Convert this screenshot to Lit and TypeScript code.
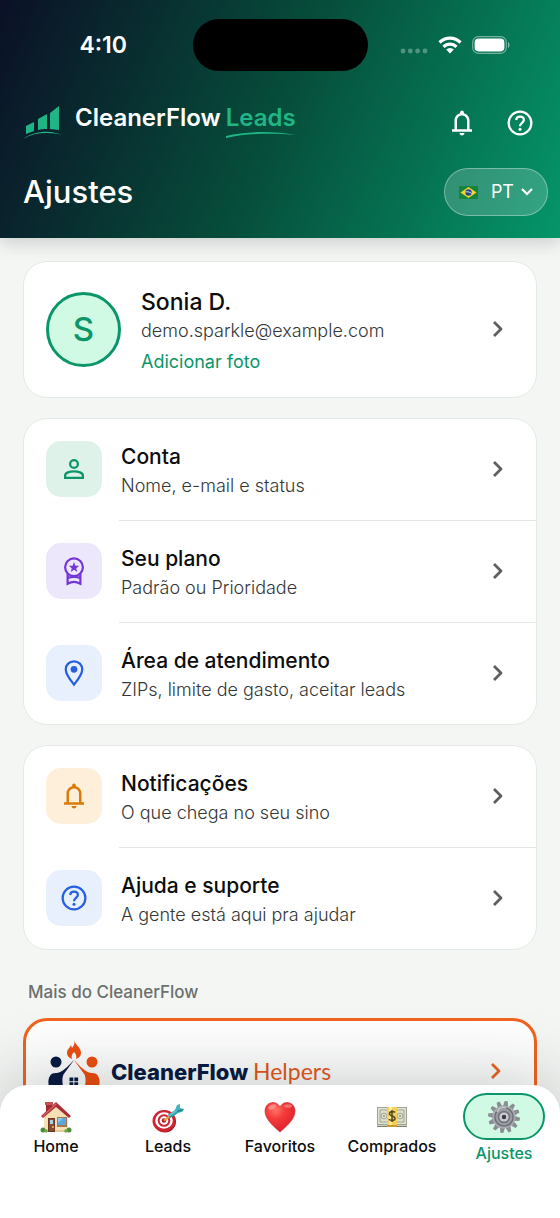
import { LitElement, html, css, svg, nothing } from "lit";
import { customElement, property } from "lit/decorators.js";

const bell = svg`<path fill="currentColor" d="M4 19v-2h2v-7c0-2.8 1.7-5.1 4.5-5.8V3.500a1.500 1.500 0 0 1 3 0v.7C16.300 4.900 18 7.200 18 10v7h2v2H4zm8 3c-1.100 0-2-.9-2-2h4c0 1.100-.9 2-2 2zM8 17h8v-7c0-2.200-1.800-4-4-4s-4 1.800-4 4v7z"/>`;
const help = svg`<circle cx="12" cy="12" r="9.100" fill="none" stroke="currentColor" stroke-width="1.800"/><path d="M8.900 9.600c.2-1.700 1.400-2.700 3.100-2.700 1.800 0 3.100 1.100 3.100 2.700 0 2.100-3.100 2.500-3.100 4.900" fill="none" stroke="currentColor" stroke-width="1.800"/><circle cx="12" cy="17" r="1.200" fill="currentColor"/>`;
const person = svg`<g fill="none" stroke="currentColor" stroke-width="1.800"><circle cx="12" cy="8" r="3.100"/><path d="M4.900 19.100v-1.900c0-2.100 3.700-3.400 7.100-3.400s7.100 1.300 7.100 3.400v1.900z"/></g>`;
const award = svg`<g fill="none" stroke="currentColor" stroke-width="1.800"><circle cx="12" cy="9" r="7.100"/><path d="M6.900 14v8.200c1.700-.9 3.400-1.500 5.100-1.500s3.400.6 5.100 1.500V14M7 17.600c3.300-1.300 6.700-1.300 10 0"/></g><path fill="currentColor" d="m12 4.800 1.100 2.900 3.100.1-2.400 1.900.8 3-2.600-1.700-2.600 1.700.8-3-2.400-1.900 3.100-.1z"/>`;
const pin = svg`<path d="M12 21.300C8.400 16.900 5.400 13 5.400 9.200 5.400 5.400 8.300 2.700 12 2.700s6.600 2.700 6.600 6.500c0 3.800-3 7.700-6.600 12.100z" fill="none" stroke="currentColor" stroke-width="1.800"/><circle cx="12" cy="9" r="2.700" fill="currentColor"/>`;
const chevron = html`<svg class="chevron" viewBox="0 0 12 18" aria-hidden="true"><path d="M2 2l7 7-7 7" fill="none" stroke="currentColor" stroke-width="2.800" stroke-linejoin="round"/></svg>`;

const house = svg`
  <path fill="#9d2e35" d="M6 2h6v10H6z"/><path fill="#c65252" d="M5 1h8v3H5z"/>
  <path fill="#f5dfb4" d="M4 14 16 3l12 11v17H4z"/>
  <path fill="#e7c996" d="M4 29h24v2H4z"/>
  <path fill="#a82f37" d="M1 15 16 1l15 14-2 2L16 6 3 17z"/><path fill="#cf6260" d="m2 15 14-13 1 1L3 16z"/>
  <path fill="#6b3527" d="M8 17h7v14H8z"/><path fill="#8a4a34" d="M9 18h5v12H9z"/><path fill="#a9cfe0" d="M10 19h3v4h-3z"/><circle cx="13" cy="26" r="1" fill="#f2c94c"/>
  <path fill="#a7784c" d="M17 16h10v10H17z"/><path fill="#5aa7e0" d="M18 17h8v7h-8z"/><path fill="#8cc9f1" d="m18 17h5l-5 5z"/>
  <circle cx="3" cy="29" r="2.500" fill="#4f8c3a"/><circle cx="6" cy="30" r="1.800" fill="#6fa94c"/><circle cx="29" cy="29" r="2.500" fill="#4f8c3a"/><circle cx="26" cy="30" r="1.800" fill="#6fa94c"/>`;
const target = svg`
  <ellipse cx="13" cy="20.500" rx="11" ry="11" fill="#8f1820"/><ellipse cx="12" cy="20" rx="11.500" ry="11" fill="#cf2330"/>
  <ellipse cx="12" cy="19.500" rx="8.800" ry="8.300" fill="#fff"/><circle cx="12" cy="19.500" r="6.300" fill="#cf2330"/><circle cx="12" cy="19.500" r="4.300" fill="#fff"/><circle cx="12" cy="19.500" r="2.300" fill="#b51d29"/>
  <path d="m12 19.500 7-5" stroke="#e0a63e" stroke-width="2"/>
  <path d="m17 15.500 9-6" stroke="#2f9bab" stroke-width="4"/><path d="m17 14.500 9-6" stroke="#63c7d1" stroke-width="2"/>
  <path fill="#45b3c1" d="m23 9 2-5 3-1v4l4 1-2 3-5 1z"/><path fill="#23818f" d="m25 11 5-1 2-2-6 1z"/>`;
const heart = svg`
  <defs><radialGradient id="heart" cx=".35" cy=".25" r=".8"><stop offset="0" stop-color="#ff7469"/><stop offset=".4" stop-color="#f43a38"/><stop offset="1" stop-color="#d81f2b"/></radialGradient></defs>
  <path fill="url(#heart)" stroke="#c92531" stroke-width=".6" d="M16 31C9 25 1 18 1 10c0-5 3.500-8.500 8-8.500 3 0 5.500 1.500 7 4.500 1.500-3 4-4.500 7-4.500 4.500 0 8 3.500 8 8.500 0 8-8 15-15 21z"/>
  <ellipse cx="8" cy="6" rx="4" ry="2.200" fill="#fff" opacity=".3" transform="rotate(-25 8 6)"/><ellipse cx="24" cy="5" rx="4" ry="1.800" fill="#fff" opacity=".3"/>`;
const money = svg`
  <path fill="#7f8474" d="M1 23h30v3H1z"/><path fill="#c7cbb9" d="M1 24h30v1H1z"/><path fill="#a3a795" d="M1 6h30v18H1z"/><path fill="#dfe1cf" d="M2 7h28v16H2z"/>
  <g fill="none" stroke="#a0a590"><path d="M4 9h24v12H4z"/><circle cx="8" cy="15" r="3"/><circle cx="24" cy="15" r="3"/></g><circle cx="8" cy="15" r="1" fill="#8c917d"/><circle cx="24" cy="15" r="1" fill="#8c917d"/>
  <path fill="#f2d05c" d="M11 6h10v18H11z"/><path fill="#fbeaa0" d="M13 6h3v18h-3z"/><path fill="#c99c2a" d="M11 24h10v2H11z"/>
  <path d="M19 11.500c-1-1.300-5.500-1.500-5.500 1.200 0 3 5.500 1.800 5.500 4.500 0 2.800-4.800 2.600-6 .9M16 9v12" fill="none" stroke="#5e4a1c" stroke-width="1.600"/>`;
const gear = svg`
  <g fill="#8b8d93">${[8, 38, 68, 98, 128, 158].map((a) => svg`<path transform="rotate(${a} 16 16)" d="M14.500 0h3l1.200 6v20l-1.200 6h-3l-1.200-6V6z"/>`)}</g>
  <circle cx="16" cy="16" r="11.500" fill="#a9abb1"/><circle cx="16" cy="16" r="9.800" fill="#696b72"/><circle cx="16" cy="16" r="8.500" fill="#9b9da4"/><circle cx="16" cy="16" r="6.300" fill="#74767d"/><circle cx="16" cy="16" r="4.600" fill="#c9cbd0"/><circle cx="16" cy="16" r="2.200" fill="#393b40"/><path d="M9 11c2-4 6-5 9-4" fill="none" stroke="#d5d6da" stroke-width="1.300"/>`;

const reset = css`
  :host { display: block; }
  * { box-sizing: border-box; }
  a { color: inherit; text-decoration: none; }
  svg { display: block; flex: none; }
`;

@customElement("status-bar")
class StatusBar extends LitElement {
  static styles = [reset, css`
    .bar { display: grid; grid-template-columns: 1fr 175px 1fr; align-items: center; padding-top: 19px; color: #fff; }
    .island { height: 52px; border-radius: 26px; background: #000; }
    .time { text-align: center; padding-left: 14px; font-size: 23px; line-height: 28px; font-weight: 600; }
    .signals { display: flex; align-items: center; justify-content: center; gap: 10px; padding-right: 18px; }
    .dots { width: 28px; height: 20px; }
    .wifi { width: 24px; height: 18px; }
    .battery { width: 38px; height: 18px; }
  `];
  render() {
    return html`<div class="bar">
      <div class="time">4:10</div>
      <div class="island"></div>
      <div class="signals">
        <svg class="dots" viewBox="0 0 28 20"><g fill="#fff" opacity=".3"><circle cx="3" cy="16" r="2.400"/><circle cx="10.300" cy="16" r="2.400"/><circle cx="17.600" cy="16" r="2.400"/><circle cx="25" cy="16" r="2.400"/></g></svg>
        <svg class="wifi" viewBox="0 0 24 18"><g fill="none" stroke="#fff" stroke-width="3.200"><path d="M1.500 6.500a15 15 0 0 1 21 0"/><path d="M5.500 10.800a9.300 9.300 0 0 1 13 0"/></g><path fill="#fff" d="M8.200 13.600a5.500 5.500 0 0 1 7.600 0L12 17.600z"/></svg>
        <svg class="battery" viewBox="0 0 38 18"><rect x=".7" y=".7" width="33.600" height="16.600" rx="5.500" fill="none" stroke="#fff" stroke-opacity=".45" stroke-width="1.200"/><rect x="2.600" y="2.600" width="29.800" height="12.800" rx="3.800" fill="#fff"/><path d="M36 6v6c2-1 2-5 0-6z" fill="#fff" opacity=".5"/></svg>
      </div>
    </div>`;
  }
}

@customElement("app-header")
class AppHeader extends LitElement {
  static styles = [reset, css`
    .header { background: linear-gradient(113deg, #0b1026 0%, #064e3b 50%, #059669 100%); color: #fff; padding-bottom: 22px; box-shadow: 0 4px 18px rgba(15, 35, 30, .2); }
    .row { display: flex; align-items: center; justify-content: space-between; padding: 0 12px 0 23px; height: 48px; }
    .brand-row { margin-top: 28px; margin-bottom: 21px; }
    .brand { display: flex; align-items: center; gap: 11px; }
    .mark { width: 41px; height: 34px; }
    .word { display: flex; gap: 5px; padding-bottom: 10px; font-size: 24px; line-height: 28px; font-weight: 600; }
    .leads { color: #1fb584; position: relative; }
    .swoosh { position: absolute; left: 0; top: 28px; width: 100%; height: 7px; }
    .actions { display: flex; gap: 2px; }
    .action { width: 56px; height: 48px; display: grid; place-items: center; border: 0; padding: 0; background: none; color: #fff; }
    .action svg { width: 30px; height: 30px; }
    .title { margin: 0; font-size: 31px; line-height: 40px; font-weight: 500; }
    .lang { height: 48px; display: flex; align-items: center; padding: 0 14px; border-radius: 24px; border: 1px solid rgba(255, 255, 255, .35); background: rgba(255, 255, 255, .18); color: #fff; font: 400 18px/24px Inter, sans-serif; }
    .flag { width: 19px; height: 13px; margin-right: 13px; }
    .caret { width: 12px; height: 8px; margin-left: 7px; }
  `];
  render() {
    return html`<header class="header">
      <status-bar></status-bar>
      <div class="row brand-row">
        <div class="brand">
          <svg class="mark" viewBox="0 0 41 34"><g fill="#1fb584"><path d="M3 20l8-4v9l-8 3zM15 13l9-5v15c-3 0-6 0-9 1zM27 7l9-7v24l-9-1z"/><path d="M0 33c12-9 28-9 40-4-14-3-28-3-40 4z"/></g></svg>
          <div class="word"><span>CleanerFlow</span><span class="leads">Leads<svg class="swoosh" viewBox="0 0 66 7" preserveAspectRatio="none"><path fill="#1fb584" d="M0 4C20-1 46-1 66 3 45 1 22 1 0 6z"/></svg></span></div>
        </div>
        <div class="actions">
          <button class="action" aria-label="Notificações"><svg viewBox="0 0 24 24">${bell}</svg></button>
          <button class="action" aria-label="Ajuda"><svg viewBox="0 0 24 24">${help}</svg></button>
        </div>
      </div>
      <div class="row">
        <h1 class="title">Ajustes</h1>
        <button class="lang">
          <svg class="flag" viewBox="0 0 19 13"><path fill="#17843b" d="M0 0h19v13H0z"/><path fill="#f5d335" d="m9.500 1 8 5.500-8 5.500-8-5.500z"/><circle cx="9.500" cy="6.500" r="3.200" fill="#26478e"/><path d="M6.500 6c2-.6 4.500 0 6 1.500" fill="none" stroke="#fff" stroke-width=".8"/></svg>
          PT
          <svg class="caret" viewBox="0 0 12 8"><path d="M1 1l5 5 5-5" fill="none" stroke="#fff" stroke-width="2.200"/></svg>
        </button>
      </div>
    </header>`;
  }
}

@customElement("settings-row")
class SettingsRow extends LitElement {
  @property() label = "";
  @property() detail = "";
  @property() tone = "green";
  @property({ attribute: false }) icon: unknown = nothing;
  static styles = [reset, css`
    .row { display: flex; align-items: center; gap: 19px; padding: 19px 32px 20px 22px; }
    .tile { width: 56px; height: 56px; border-radius: 15px; display: grid; place-items: center; flex: none; }
    .tile svg { width: 30px; height: 30px; }
    .green { background: #def2e9; color: #0a9669; }
    .purple { background: #ede7fb; color: #7536d8; }
    .blue { background: #e8effd; color: #2660e0; }
    .amber { background: #fdefd9; color: #d97a09; }
    .text { flex: 1; min-width: 0; padding-top: 5px; }
    .label { font-size: 21px; line-height: 28px; font-weight: 500; color: #0b0d0e; }
    .detail { font-size: 18px; line-height: 29px; font-weight: 300; color: #333738; }
    .chevron { width: 12px; height: 18px; color: #5c5e60; }
  `];
  render() {
    return html`<a class="row" href="#">
      <span class="tile ${this.tone}"><svg viewBox="0 0 24 24">${this.icon}</svg></span>
      <div class="text"><div class="label">${this.label}</div><div class="detail">${this.detail}</div></div>
      ${chevron}
    </a>`;
  }
}

@customElement("tab-bar")
class TabBar extends LitElement {
  static styles = [reset, css`
    .tabs { display: grid; grid-template-columns: repeat(5, 1fr); align-items: center; padding: 8px 0 55px; background: #fff; border-radius: 28px 28px 0 0; box-shadow: 0 -6px 70px rgba(15, 30, 25, .24); }
    .tab { display: flex; flex-direction: column; align-items: center; gap: 3px; font-size: 16px; line-height: 20px; font-weight: 500; color: #0b0d0e; }
    .icon { height: 32px; display: grid; place-items: center; }
    .icon svg { width: 32px; height: 32px; }
    .active { color: #0a9669; }
    .active .icon { width: 82px; height: 47px; border: 2px solid #0a9669; border-radius: 24px; background: #d1fae5; }
  `];
  tabs = [["Home", house], ["Leads", target], ["Favoritos", heart], ["Comprados", money], ["Ajustes", gear]] as const;
  render() {
    return html`<nav class="tabs">${this.tabs.map(([name, art]) => html`
      <a class="tab ${name === "Ajustes" ? "active" : ""}" href="#"><span class="icon"><svg viewBox="0 0 32 32">${art}</svg></span><span>${name}</span></a>`)}</nav>`;
  }
}

@customElement("app-root")
class AppRoot extends LitElement {
  static styles = [reset, css`
    :host { position: relative; height: 100vh; overflow: hidden; font-family: Inter, sans-serif; background: #f4f6f4; }
    .page { height: 100%; display: flex; flex-direction: column; }
    app-header { position: relative; z-index: 1; }
    .content { flex: 1; min-height: 0; overflow-y: auto; scrollbar-width: none; padding: 23px 23px 140px; }
    .card { background: #fff; border: 1px solid #e5e9e6; border-radius: 24px; margin-bottom: 20px; overflow: hidden; }
    .divider { height: 1px; margin: 0 0 0 95px; border: 0; background: #e3e6e4; }
    .profile { display: flex; align-items: center; gap: 20px; padding: 16px 32px 17px 22px; }
    .avatar { width: 75px; height: 75px; border: 3px solid #0a9669; border-radius: 50%; background: #d1fae5; color: #0a9669; display: grid; place-items: center; font-size: 33px; font-weight: 500; flex: none; }
    .who { flex: 1; min-width: 0; padding-top: 8px; }
    .name { font-size: 23px; line-height: 32px; font-weight: 500; color: #0b0d0e; }
    .mail { font-size: 18px; line-height: 26px; font-weight: 300; color: #333738; }
    .photo { font-size: 18px; line-height: 36px; font-weight: 400; color: #0a9669; }
    .chevron { width: 12px; height: 18px; color: #5c5e60; }
    .more { margin: 0 5px 13px; padding-top: 9px; font-size: 17px; line-height: 26px; font-weight: 500; color: #6a706e; }
    .helpers { display: flex; align-items: center; gap: 11px; padding: 18px 32px 20px 22px; border: 3px solid #ef6420; border-radius: 24px; background: #fff; }
    .logo { width: 52px; height: 64px; }
    .helpers-name { flex: 1; font-size: 22px; line-height: 32px; font-weight: 800; color: #071a43; }
    .thin { font-family: Lato, sans-serif; font-size: 23px; font-weight: 400; color: #e8571b; }
    .helpers .chevron { color: #ef6420; }
    .nav { position: absolute; left: 0; right: 0; bottom: 0; z-index: 2; }
  `];
  render() {
    return html`<div class="page">
      <app-header></app-header>
      <main class="content">
        <a class="card profile" href="#">
          <span class="avatar">S</span>
          <div class="who"><div class="name">Sonia D.</div><div class="mail">demo.sparkle@example.com</div><div class="photo">Adicionar foto</div></div>
          ${chevron}
        </a>
        <section class="card">
          <settings-row label="Conta" detail="Nome, e-mail e status" tone="green" .icon=${person}></settings-row>
          <hr class="divider">
          <settings-row label="Seu plano" detail="Padrão ou Prioridade" tone="purple" .icon=${award}></settings-row>
          <hr class="divider">
          <settings-row label="Área de atendimento" detail="ZIPs, limite de gasto, aceitar leads" tone="blue" .icon=${pin}></settings-row>
        </section>
        <section class="card">
          <settings-row label="Notificações" detail="O que chega no seu sino" tone="amber" .icon=${bell}></settings-row>
          <hr class="divider">
          <settings-row label="Ajuda e suporte" detail="A gente está aqui pra ajudar" tone="blue" .icon=${help}></settings-row>
        </section>
        <h2 class="more">Mais do CleanerFlow</h2>
        <a class="helpers" href="#">
          <svg class="logo" viewBox="0 0 52 64">
            <path fill="#f04e10" d="M26 1c1 5 7 7 7 13 0 3-2 5-5 6 1-3 0-5-2-7-2 2-3 4-2 7-3-1-5-3-5-6 0-4 3-5 4-8l1 3c2-2 3-5 2-8z"/>
            <circle cx="8" cy="23" r="5.500" fill="#071a43"/><circle cx="44" cy="23" r="5.500" fill="#f04e10"/>
            <path fill="#071a43" d="M26 21 15.500 35.500C14 39 14 44 16 52H3C0 47-1 40 3 35.500c2-2 5-1 8-2C17 31 21 26 26 21z"/>
            <path fill="#f04e10" d="M26 21 36.500 35.500C38 39 38 44 36 52H49c3-5 4-12 0-16.500-2-2-5-1-8-2C35 31 31 26 26 21z"/>
            <path fill="#071a43" d="M21.500 38.500h3.800v3.800h-3.800zM26.300 38.500h3.800v3.800h-3.800zM21.500 43.300h3.800v3.800h-3.800zM26.300 43.300h3.800v3.800h-3.800z"/>
          </svg>
          <span class="helpers-name">CleanerFlow <span class="thin">Helpers</span></span>
          ${chevron}
        </a>
      </main>
      <tab-bar class="nav"></tab-bar>
    </div>`;
  }
}
